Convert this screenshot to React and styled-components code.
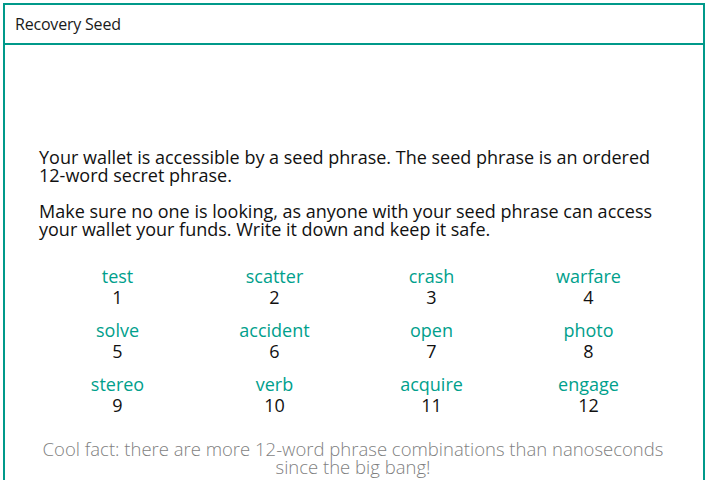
import React from 'react';
import styled, {createGlobalStyle} from 'styled-components';

const GlobalStyle = createGlobalStyle`
  html, body {
    margin: 0;
    padding: 0;
    background: #fff;
  }
  body {
    font-family: "Open Sans", "DejaVu Sans", sans-serif;
    color: #111;
  }
`;

const Page = styled.div`
  padding: 3px 4px 0 3px;
  height: 480px;
  box-sizing: border-box;
`;

const Frame = styled.section`
  border: 2px solid #00998a;
  border-bottom: none;
  height: 100%;
  box-sizing: border-box;
  display: flex;
  flex-direction: column;
`;

const Header = styled.header`
  height: 38px;
  border-bottom: 2px solid #00998a;
  display: flex;
  align-items: center;
  padding-left: 10px;
  font-size: 16px;
  letter-spacing: -0.2px;
  color: #1a1a1a;
`;

const Body = styled.div`
  padding: 103px 36px 0 34px;
`;

const Para = styled.p`
  margin: 0 0 18px 0;
  font-size: 18px;
  line-height: 18px;
`;

const Grid = styled.div`
  display: grid;
  grid-template-columns: repeat(4, 1fr);
  row-gap: 12px;
  margin-top: 28px;
`;

const Cell = styled.div`
  display: flex;
  flex-direction: column;
  align-items: center;
  font-size: 18px;
  line-height: 21px;
`;

const Word = styled.span`
  color: #00a08c;
`;

const Num = styled.span`
  color: #111;
`;

const Fact = styled.p`
  margin: 24px 0 0 0;
  text-align: center;
  color: #7f7f7f;
  font-size: 18.5px;
  font-weight: 300;
  line-height: 18px;
`;

const words = [
  'test', 'scatter', 'crash', 'warfare',
  'solve', 'accident', 'open', 'photo',
  'stereo', 'verb', 'acquire', 'engage'
];

export default function App() {
  return (
    <Page>
      <GlobalStyle />
      <Frame>
        <Header>Recovery Seed</Header>
        <Body>
          <Para>
            Your wallet is accessible by a seed phrase. The seed phrase is an ordered 12-word secret phrase.
          </Para>
          <Para>
            Make sure no one is looking, as anyone with your seed phrase can access your wallet your funds. Write it down and keep it safe.
          </Para>
          <Grid>
            {words.map((w, i) => (
              <Cell key={w}>
                <Word>{w}</Word>
                <Num>{i + 1}</Num>
              </Cell>
            ))}
          </Grid>
          <Fact>
            Cool fact: there are more 12-word phrase combinations than nanoseconds since the big bang!
          </Fact>
        </Body>
      </Frame>
    </Page>
  );
}
